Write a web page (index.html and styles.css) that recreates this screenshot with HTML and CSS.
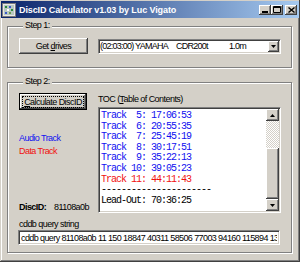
FILE: index.html
```html
<!DOCTYPE html>
<html lang="en">

<head>
    <meta charset="UTF-8">
    <meta name="viewport" content="width=device-width, initial-scale=1.0">
    <title>DiscID Calculator v1.03</title>
    <link rel="stylesheet" href="styles.css">
</head>

<body>
    <div class="window">
        <div class="titlebar">
            <svg class="app-icon" width="14" height="14" viewBox="0 0 14 14">
                <rect x="0.5" y="0.5" width="13" height="13" fill="#e8e8e8" stroke="#7a7a7a"/>
                <rect x="2" y="2" width="10" height="10" fill="#b8c8c0"/>
                <rect x="3" y="3" width="2" height="2" fill="#2a8a3a"/>
                <rect x="7" y="3" width="2" height="2" fill="#3a5ac8"/>
                <rect x="5" y="6" width="2" height="2" fill="#ffffff"/>
                <rect x="9" y="6" width="2" height="2" fill="#2a8a3a"/>
                <rect x="3" y="9" width="2" height="2" fill="#3a5ac8"/>
                <rect x="7" y="9" width="2" height="2" fill="#6a9a50"/>
            </svg>
            <span class="title">DiscID Calculator v1.03 by Luc Vigato</span>
            <div class="title-buttons">
                <span class="tbtn">
                    <svg width="6" height="2" viewBox="0 0 6 2"><rect width="6" height="2" fill="#000"/></svg>
                </span>
                <span class="tbtn">
                    <svg width="8" height="7" viewBox="0 0 8 7"><path d="M0.5 0.5h7v6h-7z M0 1.5h8" stroke="#000" fill="none"/></svg>
                </span>
                <span class="tbtn close">
                    <svg width="7" height="6" viewBox="0 0 7 6"><path d="M0.5 0.5l6 5M6.5 0.5l-6 5" stroke="#000" stroke-width="1.4"/></svg>
                </span>
            </div>
        </div>

        <div class="client">
            <div class="group step1">
                <div class="group-title">Step 1:</div>
                <div class="drive-row">
                    <button class="btn get-drives">Get <u>d</u>rives</button>
                    <div class="combo">
                        <div class="combo-text">
                            <span class="drive-time">(02:03:00) YAMAHA</span>
                            <span class="drive-model">CDR200t</span>
                            <span>1.0m</span>
                        </div>
                        <div class="arrow-btn">
                            <svg width="5" height="3" viewBox="0 0 5 3"><path d="M0 0h5L2.5 3z" fill="#000"/></svg>
                        </div>
                    </div>
                </div>
            </div>

            <div class="group step2">
                <div class="group-title">Step 2:</div>
                <div class="calc-grid">
                    <div class="left-col">
                        <button class="btn calc default"><span class="focus"><u>C</u>alculate DiscID</span></button>
                        <div class="legend audio">Audio Track</div>
                        <div class="legend data">Data Track</div>
                        <div class="discid"><span class="discid-label">DiscID:</span>81108a0b</div>
                    </div>
                    <div class="right-col">
                        <div class="toc-label">TOC (<u>T</u>able of Contents)</div>
                        <div class="listbox">
                            <div class="toc-lines">
                                <div class="audio">Track  5: 17:06:53</div>
                                <div class="audio">Track  6: 20:55:35</div>
                                <div class="audio">Track  7: 25:45:19</div>
                                <div class="audio">Track  8: 30:17:51</div>
                                <div class="audio">Track  9: 35:22:13</div>
                                <div class="audio">Track 10: 39:05:23</div>
                                <div class="data">Track 11: 44:11:43</div>
                                <div>----------------------</div>
                                <div>Lead-Out: 70:36:25</div>
                            </div>
                            <div class="scrollbar">
                                <div class="arrow-btn">
                                    <svg width="5" height="3" viewBox="0 0 5 3"><path d="M0 3h5L2.5 0z" fill="#000"/></svg>
                                </div>
                                <div class="track">
                                    <div class="thumb"></div>
                                </div>
                                <div class="arrow-btn">
                                    <svg width="5" height="3" viewBox="0 0 5 3"><path d="M0 0h5L2.5 3z" fill="#000"/></svg>
                                </div>
                            </div>
                        </div>
                    </div>
                </div>
                <div class="query-label">cddb query string</div>
                <input class="query" type="text" readonly value="cddb query 81108a0b 11 150 18847 40311 58506 77003 94160 115894 13">
            </div>
        </div>
    </div>
</body>

</html>
```

FILE: styles.css
```css
body {
    margin: 0;
    background: #d4d0c8;
    font-family: "Liberation Sans", Arial, sans-serif;
    font-size: 9px;
    letter-spacing: -0.55px;
    color: #000;
}

.window {
    width: 300px;
    height: 262px;
    box-sizing: border-box;
    padding: 1px;
    background: #d4d0c8;
    box-shadow: inset -1px -1px 0 #404040, inset 1px 1px 0 #d4d0c8,
        inset -2px -2px 0 #808080, inset 2px 2px 0 #fff;
}

/* title bar */
.titlebar {
    height: 17px;
    display: flex;
    align-items: center;
    padding: 0 2px 0 1px;
    background: linear-gradient(to right, #0a246a, #a6caf0);
}

.app-icon {
    flex: none;
}

.title {
    margin-left: 3px;
    color: #fff;
    font-weight: bold;
    font-size: 9px;
    letter-spacing: -0.1px;
    white-space: nowrap;
}

.title-buttons {
    margin-left: auto;
    display: flex;
}

.tbtn {
    width: 12px;
    height: 10px;
    box-sizing: border-box;
    display: flex;
    align-items: center;
    justify-content: center;
    background: #d4d0c8;
    box-shadow: inset -1px -1px 0 #404040, inset 1px 1px 0 #fff,
        inset -2px -2px 0 #808080;
}

.tbtn:first-child svg {
    margin-top: 4px;
}

.tbtn.close {
    margin-left: 2px;
}

/* client area */
.client {
    padding: 8px 7px 0 6px;
}

.group {
    border: 1px solid #808080;
    box-shadow: 1px 1px 0 #fff, inset 1px 1px 0 #fff;
    padding: 0 10px 13px 11px;
}

.step2 {
    margin-top: 14px;
    padding-bottom: 7px;
}

.group-title {
    width: fit-content;
    height: 11px;
    line-height: 11px;
    margin: -7px 0 0 4px;
    padding: 0 2px;
    background: #d4d0c8;
}

.drive-row {
    display: flex;
    gap: 10px;
    margin-top: 7px;
}

.btn {
    margin: 0;
    padding: 0;
    border: none;
    background: #d4d0c8;
    font: inherit;
    letter-spacing: inherit;
    color: #000;
    box-shadow: inset -1px -1px 0 #404040, inset 1px 1px 0 #fff,
        inset -2px -2px 0 #808080;
}

.get-drives {
    width: 69px;
    height: 16px;
}

.combo {
    flex: 1;
    height: 15px;
    margin-top: 1px;
    box-sizing: border-box;
    display: flex;
    background: #fff;
    border: 1px solid;
    border-color: #808080 #fff #fff #808080;
    box-shadow: inset 1px 1px 0 #404040, inset -1px -1px 0 #d4d0c8;
    padding: 1px;
}

.combo-text {
    flex: 1;
    display: flex;
    line-height: 11px;
    letter-spacing: -0.75px;
    white-space: nowrap;
}

.drive-time {
    width: 76px;
}

.drive-model {
    width: 53px;
}

.arrow-btn {
    width: 11px;
    height: 11px;
    box-sizing: border-box;
    display: flex;
    align-items: center;
    justify-content: center;
    background: #d4d0c8;
    box-shadow: inset -1px -1px 0 #404040, inset 1px 1px 0 #fff,
        inset -2px -2px 0 #808080;
}

/* step 2 */
.calc-grid {
    display: grid;
    grid-template-columns: 79px 1fr;
    margin-top: 6px;
}

.left-col {
    display: flex;
    flex-direction: column;
}

.calc {
    width: 68px;
    height: 17px;
    border: 1px solid #000;
    display: flex;
    align-items: center;
    justify-content: center;
}

.focus {
    display: block;
    width: 60px;
    line-height: 10px;
    outline: 1px dotted #000;
}

.legend {
    line-height: 12px;
}

.legend.audio {
    margin-top: 22px;
    color: #1010f0;
}

.legend.data {
    margin-top: 1px;
    color: #f01010;
}

.discid {
    margin-top: auto;
    line-height: 12px;
}

.discid-label {
    display: inline-block;
    width: 35px;
    font-weight: bold;
}

.toc-label {
    line-height: 13px;
}

.listbox {
    height: 106px;
    margin-top: 1px;
    box-sizing: border-box;
    display: flex;
    background: #fff;
    border: 1px solid;
    border-color: #808080 #fff #fff #808080;
    box-shadow: inset 1px 1px 0 #404040, inset -1px -1px 0 #d4d0c8;
    padding: 1px;
}

.toc-lines {
    flex: 1;
    padding: 2px 0 0 1px;
    font-family: "Liberation Mono", "Courier New", monospace;
    font-size: 10px;
    letter-spacing: -1px;
    line-height: 10.6px;
    overflow: hidden;
}

.toc-lines div {
    white-space: pre;
}

.toc-lines .audio {
    color: #1010f0;
}

.toc-lines .data {
    color: #f01010;
}

.scrollbar {
    width: 13px;
    display: flex;
    flex-direction: column;
}

.scrollbar .arrow-btn {
    width: 13px;
    height: 12px;
}

.track {
    flex: 1;
    display: flex;
    flex-direction: column;
    background: repeating-conic-gradient(#d4d0c8 0 25%, #fff 0 50%) 0 0 / 2px 2px;
}

.thumb {
    flex: 1;
    margin-top: 27px;
    background: #d4d0c8;
    box-shadow: inset -1px -1px 0 #404040, inset 1px 1px 0 #fff,
        inset -2px -2px 0 #808080;
}

.query-label {
    margin-top: 6px;
    line-height: 11px;
}

.query {
    display: block;
    width: 100%;
    height: 15px;
    margin: 0 0 0 -1px;
    box-sizing: border-box;
    padding: 0 2px;
    font: inherit;
    letter-spacing: -0.6px;
    color: #000;
    background: #fff;
    border: 1px solid;
    border-color: #808080 #fff #fff #808080;
    box-shadow: inset 1px 1px 0 #404040, inset -1px -1px 0 #d4d0c8;
    outline: none;
}
```
